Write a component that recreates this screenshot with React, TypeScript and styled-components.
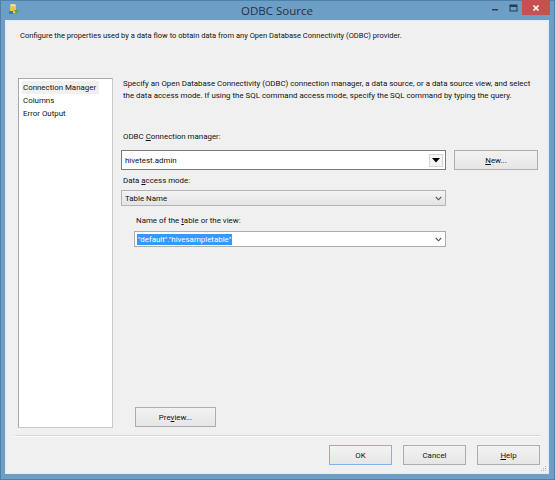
import React from "react";
import styled, { createGlobalStyle } from "styled-components";

const Global = createGlobalStyle`
  html, body { margin: 0; padding: 0; background: #6d9ec6; }
  body { font-family: Roboto, "Noto Sans", sans-serif; }
  * { box-sizing: border-box; }
`;

const FS = "7.9px";

const Window = styled.div`
  width: 555px;
  height: 480px;
  background: #6d9ec6;
  border: 1px solid #4f80aa;
  display: flex;
  flex-direction: column;
  padding: 0 5px 5px 4px;
`;

const TitleBar = styled.div`
  height: 19px;
  display: flex;
  align-items: flex-start;
  position: relative;
`;

const AppIcon = styled.svg`
  margin: 2px 0 0 3px;
  width: 12px;
  height: 12px;
`;

const Title = styled.div`
  position: absolute;
  left: 0;
  right: 0;
  top: 2px;
  text-align: center;
  font-family: "Open Sans", sans-serif;
  font-size: 11.5px;
  color: #26303a;
  pointer-events: none;
`;

const Controls = styled.div`
  margin-left: auto;
  display: flex;
  align-items: flex-start;
  margin-top: -1px;
  margin-right: -1px;
`;

const CtrlBtn = styled.div<{ $close?: boolean }>`
  width: ${(p) => (p.$close ? "28px" : "18px")};
  height: 15px;
  background: ${(p) => (p.$close ? "#c75050" : "transparent")};
  display: flex;
  align-items: center;
  justify-content: center;
`;

const Client = styled.div`
  flex: 1;
  background: #f0f0f0;
  border: 1px solid #e3eaf1;
  display: flex;
  flex-direction: column;
`;

const Header = styled.div`
  height: 57px;
  padding: 10px 0 0 14px;
  font-size: 7.55px;
  color: #111;
`;

const Body = styled.div`
  display: flex;
  gap: 8px;
  padding-left: 12px;
  height: 350px;
`;

const ListBox = styled.div`
  width: 95px;
  background: #fff;
  border: 1px solid #a9a9a9;
  border-right-color: #c8c8c8;
  border-bottom-color: #c8c8c8;
  padding: 2px 3px;
  display: flex;
  flex-direction: column;
`;

const ListItem = styled.div<{ $selected?: boolean }>`
  font-size: ${FS};
  height: 13px;
  line-height: 13px;
  padding-left: 1px;
  color: #111;
  white-space: nowrap;
  background: ${(p) => (p.$selected ? "#f0f0f0" : "transparent")};
  width: 77px;
`;

const Panel = styled.div`
  flex: 1;
  display: flex;
  flex-direction: column;
  font-size: ${FS};
  color: #111;
`;

const Para = styled.p`
  margin: 0;
  padding-top: 0px;
  line-height: 12px;
  width: 420px;
  padding-left: 2px;
`;

const Label = styled.div<{ $indent?: number; $top: number }>`
  margin-top: ${(p) => p.$top}px;
  padding-left: ${(p) => p.$indent ?? 2}px;
  height: 12px;
  line-height: 12px;
`;

const Row = styled.div<{ $top: number }>`
  margin-top: ${(p) => p.$top}px;
  display: flex;
  align-items: center;
  gap: 8px;
`;

const Combo = styled.div`
  width: 325px;
  height: 20px;
  background: #fff;
  border: 1px solid #7a7a7a;
  display: flex;
  align-items: center;
  padding-left: 3px;
`;

const ComboText = styled.div`
  flex: 1;
`;

const DropBtn = styled.div`
  width: 14px;
  height: 13px;
  margin-right: 2px;
  border: 1px solid #d4d4d4;
  background: #f4f4f4;
  display: flex;
  align-items: center;
  justify-content: center;
`;

const Button = styled.div<{ $w: number; $default?: boolean }>`
  width: ${(p) => p.$w}px;
  height: 20px;
  border: 1px solid ${(p) => (p.$default ? "#7eb4ea" : "#adadad")};
  background: linear-gradient(#f2f2f2, #e6e6e6);
  display: flex;
  align-items: center;
  justify-content: center;
  font-size: ${FS};
  color: #111;
`;

const Select = styled.div<{ $w: number; $plain?: boolean; $left?: number }>`
  margin-left: ${(p) => p.$left ?? 0}px;
  width: ${(p) => p.$w}px;
  height: 16px;
  border: 1px solid ${(p) => (p.$plain ? "#acacac" : "#b4b4b4")};
  background: ${(p) => (p.$plain ? "#fff" : "linear-gradient(#f3f3f3, #e4e4e4)")};
  display: flex;
  align-items: center;
  padding: 0 3px 0 2px;
`;

const SelText = styled.div<{ $hl?: boolean }>`
  flex: 1;
  span {
    background: ${(p) => (p.$hl ? "#3399ff" : "transparent")};
    color: ${(p) => (p.$hl ? "#fff" : "#111")};
    padding: 1px 1px;
  }
`;

const Chevron = styled.svg`
  width: 7px;
  height: 5px;
`;

const Spacer = styled.div`
  flex: 1;
`;

const PreviewWrap = styled.div`
  padding-left: 14px;
  margin-bottom: 1px;
`;

const Separator = styled.div`
  margin: 7px 8px 0 9px;
  height: 2px;
  border-top: 1px solid #d5d5d5;
  border-bottom: 1px solid #ffffff;
`;

const Footer = styled.div`
  display: flex;
  justify-content: flex-end;
  gap: 11px;
  padding: 8px 8px 0 0;
  position: relative;
  flex: 1;
`;

const Grip = styled.svg`
  position: absolute;
  right: 1px;
  bottom: 1px;
  width: 6px;
  height: 6px;
`;

const ChevronIcon = () => (
  <Chevron viewBox="0 0 7 5">
    <path d="M0.8 1 L3.5 3.8 L6.2 1" fill="none" stroke="#555" strokeWidth="1.1" />
  </Chevron>
);

export default function App() {
  return (
    <>
      <Global />
      <Window>
        <TitleBar>
          <AppIcon viewBox="0 0 12 12">
            <rect x="2" y="2" width="6" height="8" rx="1" fill="#e8c64a" />
            <ellipse cx="5" cy="2.3" rx="3" ry="1.3" fill="#f6e08a" />
            <path d="M6 7 L11 7 L8.5 11 Z" fill="#5aa83c" />
            <rect x="1" y="8" width="4" height="3" fill="#3b77c0" />
          </AppIcon>
          <Title>ODBC Source</Title>
          <Controls>
            <CtrlBtn>
              <svg width="8" height="8" viewBox="0 0 8 8">
                <rect x="1" y="5" width="6" height="1.4" fill="#2b3a48" />
              </svg>
            </CtrlBtn>
            <CtrlBtn>
              <svg width="9" height="8" viewBox="0 0 9 8">
                <rect x="1" y="1" width="7" height="6" fill="none" stroke="#2b3a48" strokeWidth="1" />
                <rect x="1" y="1" width="7" height="2" fill="#2b3a48" />
              </svg>
            </CtrlBtn>
            <CtrlBtn $close>
              <svg width="8" height="8" viewBox="0 0 8 8">
                <path d="M1.5 1.5 L6.5 6.5 M6.5 1.5 L1.5 6.5" stroke="#fff" strokeWidth="1.6" />
              </svg>
            </CtrlBtn>
          </Controls>
        </TitleBar>
        <Client>
          <Header>
            Configure the properties used by a data flow to obtain data from any Open Database Connectivity (ODBC) provider.
          </Header>
          <Body>
            <ListBox>
              <ListItem $selected>Connection Manager</ListItem>
              <ListItem>Columns</ListItem>
              <ListItem>Error Output</ListItem>
            </ListBox>
            <Panel>
              <Para>
                Specify an Open Database Connectivity (ODBC) connection manager, a data source, or a data source view, and select
                the data access mode. If using the SQL command access mode, specify the SQL command by typing the query.
              </Para>
              <Label $top={29}>
                ODBC <u>C</u>onnection manager:
              </Label>
              <Row $top={7}>
                <Combo>
                  <ComboText>hivetest.admin</ComboText>
                  <DropBtn>
                    <svg width="8" height="5" viewBox="0 0 8 5">
                      <path d="M0 0 L8 0 L4 4.5 Z" fill="#000" />
                    </svg>
                  </DropBtn>
                </Combo>
                <Button $w={84}>
                  <span>
                    <u>N</u>ew...
                  </span>
                </Button>
              </Row>
              <Label $top={5}>
                Data <u>a</u>ccess mode:
              </Label>
              <Row $top={3}>
                <Select $w={325}>
                  <SelText>
                    <span>Table Name</span>
                  </SelText>
                  <ChevronIcon />
                </Select>
              </Row>
              <Label $top={9} $indent={15}>
                Name of the <u>t</u>able or the view:
              </Label>
              <Row $top={4}>
                <Select $w={312} $plain $left={13}>
                  <SelText $hl>
                    <span>"default"."hivesampletable"</span>
                  </SelText>
                  <ChevronIcon />
                </Select>
              </Row>
              <Spacer />
              <PreviewWrap>
                <Button $w={81}>
                  <span>
                    Pre<u>v</u>iew...
                  </span>
                </Button>
              </PreviewWrap>
            </Panel>
          </Body>
          <Separator />
          <Footer>
            <Button $w={63} $default>
              OK
            </Button>
            <Button $w={63}>Cancel</Button>
            <Button $w={63}>
              <span>
                <u>H</u>elp
              </span>
            </Button>
            <Grip viewBox="0 0 6 6">
              <rect x="4" y="0" width="1" height="1" fill="#b0b0b0" />
              <rect x="2" y="2" width="1" height="1" fill="#b0b0b0" />
              <rect x="4" y="2" width="1" height="1" fill="#b0b0b0" />
              <rect x="0" y="4" width="1" height="1" fill="#b0b0b0" />
              <rect x="2" y="4" width="1" height="1" fill="#b0b0b0" />
              <rect x="4" y="4" width="1" height="1" fill="#b0b0b0" />
            </Grip>
          </Footer>
        </Client>
      </Window>
    </>
  );
}
